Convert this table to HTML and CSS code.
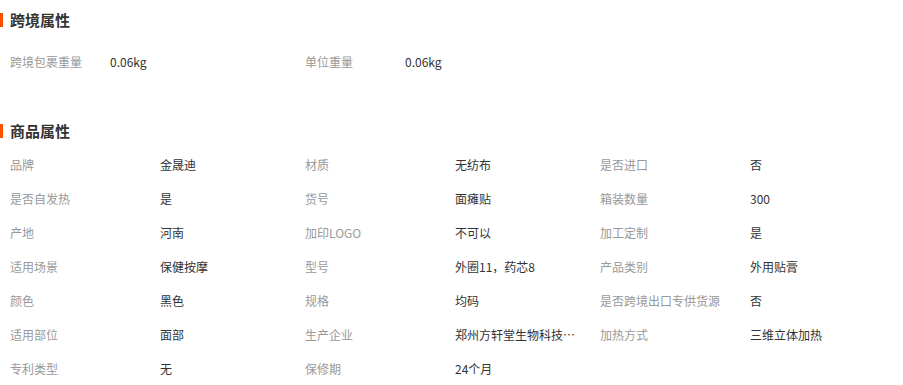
FILE: index.html
```html
<!DOCTYPE html>
<html lang="zh">
<head>
<meta charset="utf-8">
<link rel="stylesheet" href="styles.css">
</head>
<body>
<section class="sec sec-first">
  <h2 class="title">跨境属性</h2>
  <div class="grid grid-2">
    <div class="item item-short"><span class="label">跨境包裹重量</span><span class="value">0.06kg</span></div>
    <div class="item item-short"><span class="label">单位重量</span><span class="value">0.06kg</span></div>
  </div>
</section>
<section class="sec sec-second">
  <h2 class="title">商品属性</h2>
  <div class="grid grid-3">
    <div class="item"><span class="label">品牌</span><span class="value">金晟迪</span></div>
    <div class="item"><span class="label">材质</span><span class="value">无纺布</span></div>
    <div class="item"><span class="label">是否进口</span><span class="value">否</span></div>
    <div class="item"><span class="label">是否自发热</span><span class="value">是</span></div>
    <div class="item"><span class="label">货号</span><span class="value">面瘫贴</span></div>
    <div class="item"><span class="label">箱装数量</span><span class="value">300</span></div>
    <div class="item"><span class="label">产地</span><span class="value">河南</span></div>
    <div class="item"><span class="label">加印LOGO</span><span class="value">不可以</span></div>
    <div class="item"><span class="label">加工定制</span><span class="value">是</span></div>
    <div class="item"><span class="label">适用场景</span><span class="value">保健按摩</span></div>
    <div class="item"><span class="label">型号</span><span class="value">外圈11，药芯8</span></div>
    <div class="item"><span class="label">产品类别</span><span class="value">外用贴膏</span></div>
    <div class="item"><span class="label">颜色</span><span class="value">黑色</span></div>
    <div class="item"><span class="label">规格</span><span class="value">均码</span></div>
    <div class="item"><span class="label">是否跨境出口专供货源</span><span class="value">否</span></div>
    <div class="item"><span class="label">适用部位</span><span class="value">面部</span></div>
    <div class="item"><span class="label">生产企业</span><span class="value">郑州方轩堂生物科技…</span></div>
    <div class="item"><span class="label">加热方式</span><span class="value">三维立体加热</span></div>
    <div class="item"><span class="label">专利类型</span><span class="value">无</span></div>
    <div class="item"><span class="label">保修期</span><span class="value">24个月</span></div>
  </div>
</section>
</body>
</html>
```
FILE: styles.css
```css
html, body {
  margin: 0;
  padding: 0;
  background: #fff;
}
body {
  font-family: "Noto Sans CJK SC", "Microsoft YaHei", sans-serif;
  font-size: 12px;
  color: #333;
  width: 903px;
  overflow: hidden;
}
.sec-first {
  padding-top: 3px;
}
.sec-second {
  margin-top: 35px;
}
.title {
  position: relative;
  margin: 0;
  height: 34px;
  line-height: 34px;
  padding-left: 10px;
  font-size: 15px;
  font-weight: bold;
  color: #333;
}
.title::before {
  content: "";
  position: absolute;
  left: 0;
  top: 10px;
  width: 3px;
  height: 14px;
  background: #ff5000;
}
.sec-first .grid {
  margin-top: 8px;
}
.grid {
  display: grid;
  padding-left: 10px;
}
.grid-2 {
  grid-template-columns: 295px 295px;
}
.grid-3 {
  grid-template-columns: 295px 295px 295px;
}
.item {
  display: flex;
  height: 34px;
  line-height: 34px;
  white-space: nowrap;
}
.label {
  width: 150px;
  flex: none;
  color: #999;
}
.item-short .label {
  width: 100px;
}
.value {
  color: #333;
}
```
